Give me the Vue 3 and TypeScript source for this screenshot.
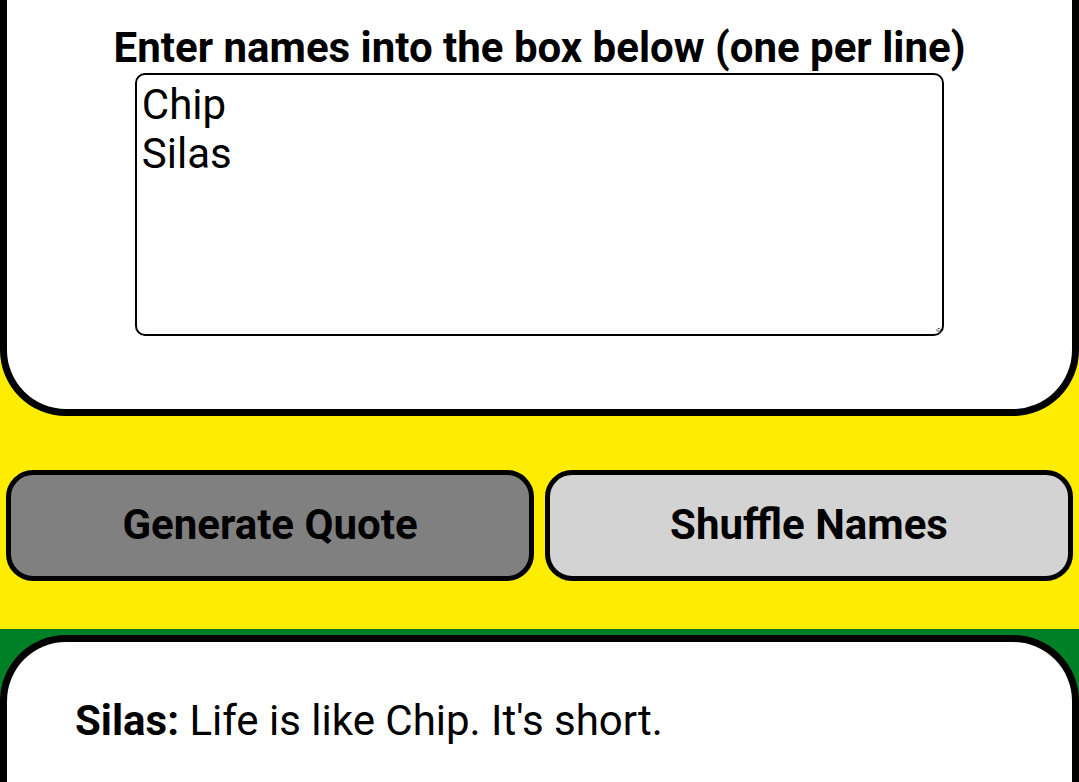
<script setup lang="ts">
import { computed, ref } from 'vue'

interface Quote {
  speaker: string
  text: (other: string) => string
}

const names = ref<string>('Chip\nSilas')
const nameList = computed<string[]>(() =>
  names.value.split('\n').map((n) => n.trim()).filter(Boolean),
)
const quote = ref<Quote & { other: string }>({
  speaker: 'Silas',
  other: 'Chip',
  text: (other) => `Life is like ${other}. It's short.`,
})

function generate(): void {
  const [other, speaker] = nameList.value
  if (other && speaker) quote.value = { ...quote.value, speaker, other }
}

function shuffle(): void {
  names.value = [...nameList.value].sort(() => Math.random() - 0.5).join('\n')
}
</script>

<template>
  <main class="page">
    <section class="card names">
      <label class="label" for="names">Enter names into the box below (one per line)</label>
      <div class="field">
        <textarea id="names" v-model="names" class="box" spellcheck="false"></textarea>
        <svg class="grip" viewBox="0 0 8 8" aria-hidden="true">
          <path d="M2 4.5V2.5L3 1.5H4.5L5.5 2.5V4M3 4H5M4 7L7 4" fill="none" stroke="#555" stroke-width="1" />
        </svg>
      </div>
    </section>
    <div class="actions">
      <button class="button generate" type="button" @click="generate">Generate Quote</button>
      <button class="button shuffle" type="button" @click="shuffle">Shuffle Names</button>
    </div>
    <section class="card output">
      <p class="line"><b>{{ quote.speaker }}:</b> {{ quote.text(quote.other) }}</p>
    </section>
  </main>
</template>

<style>
body {
  background: #008026;
}
</style>

<style scoped>
.page {
  display: flex;
  flex-direction: column;
  min-height: 100vh;
  background: linear-gradient(#ffed00 629px, #008026 629px);
  color: #000;
  font-family: Roboto, "Liberation Sans", sans-serif;
  font-size: 42px;
  line-height: 49px;
}

.card {
  box-sizing: border-box;
  border: 7px solid #000;
  background: #fff;
}

.names {
  display: flex;
  flex-direction: column;
  align-items: center;
  gap: 1px;
  border-top: 0;
  border-radius: 0 0 66px 66px;
  padding: 23px 0 73px;
}

.label {
  font-weight: 700;
  text-align: center;
}

.field {
  position: relative;
  display: flex;
  width: 76%;
}

.box {
  box-sizing: border-box;
  width: 100%;
  height: 263px;
  margin: 0;
  padding: 5px;
  border: 2px solid #000;
  border-radius: 10px;
  background: #fff;
  color: #000;
  font: inherit;
  resize: none;
  outline: none;
}

.grip {
  position: absolute;
  right: 1px;
  bottom: 1px;
  width: 8px;
  height: 8px;
}

.actions {
  display: grid;
  grid-template-columns: 1fr 1fr;
  gap: 11px;
  padding: 54px 6px;
}

.button {
  padding: 25px 10px 27px;
  border: 5px solid #000;
  border-radius: 27px;
  color: #000;
  font: inherit;
  font-weight: 700;
  cursor: pointer;
}

.generate {
  background: #808080;
}

.shuffle {
  background: #d3d3d3;
}

.output {
  flex: 1;
  border-bottom: 0;
  border-radius: 66px 66px 0 0;
  padding: 54px 68px 30px;
}

.line {
  margin: 0;
}
</style>
